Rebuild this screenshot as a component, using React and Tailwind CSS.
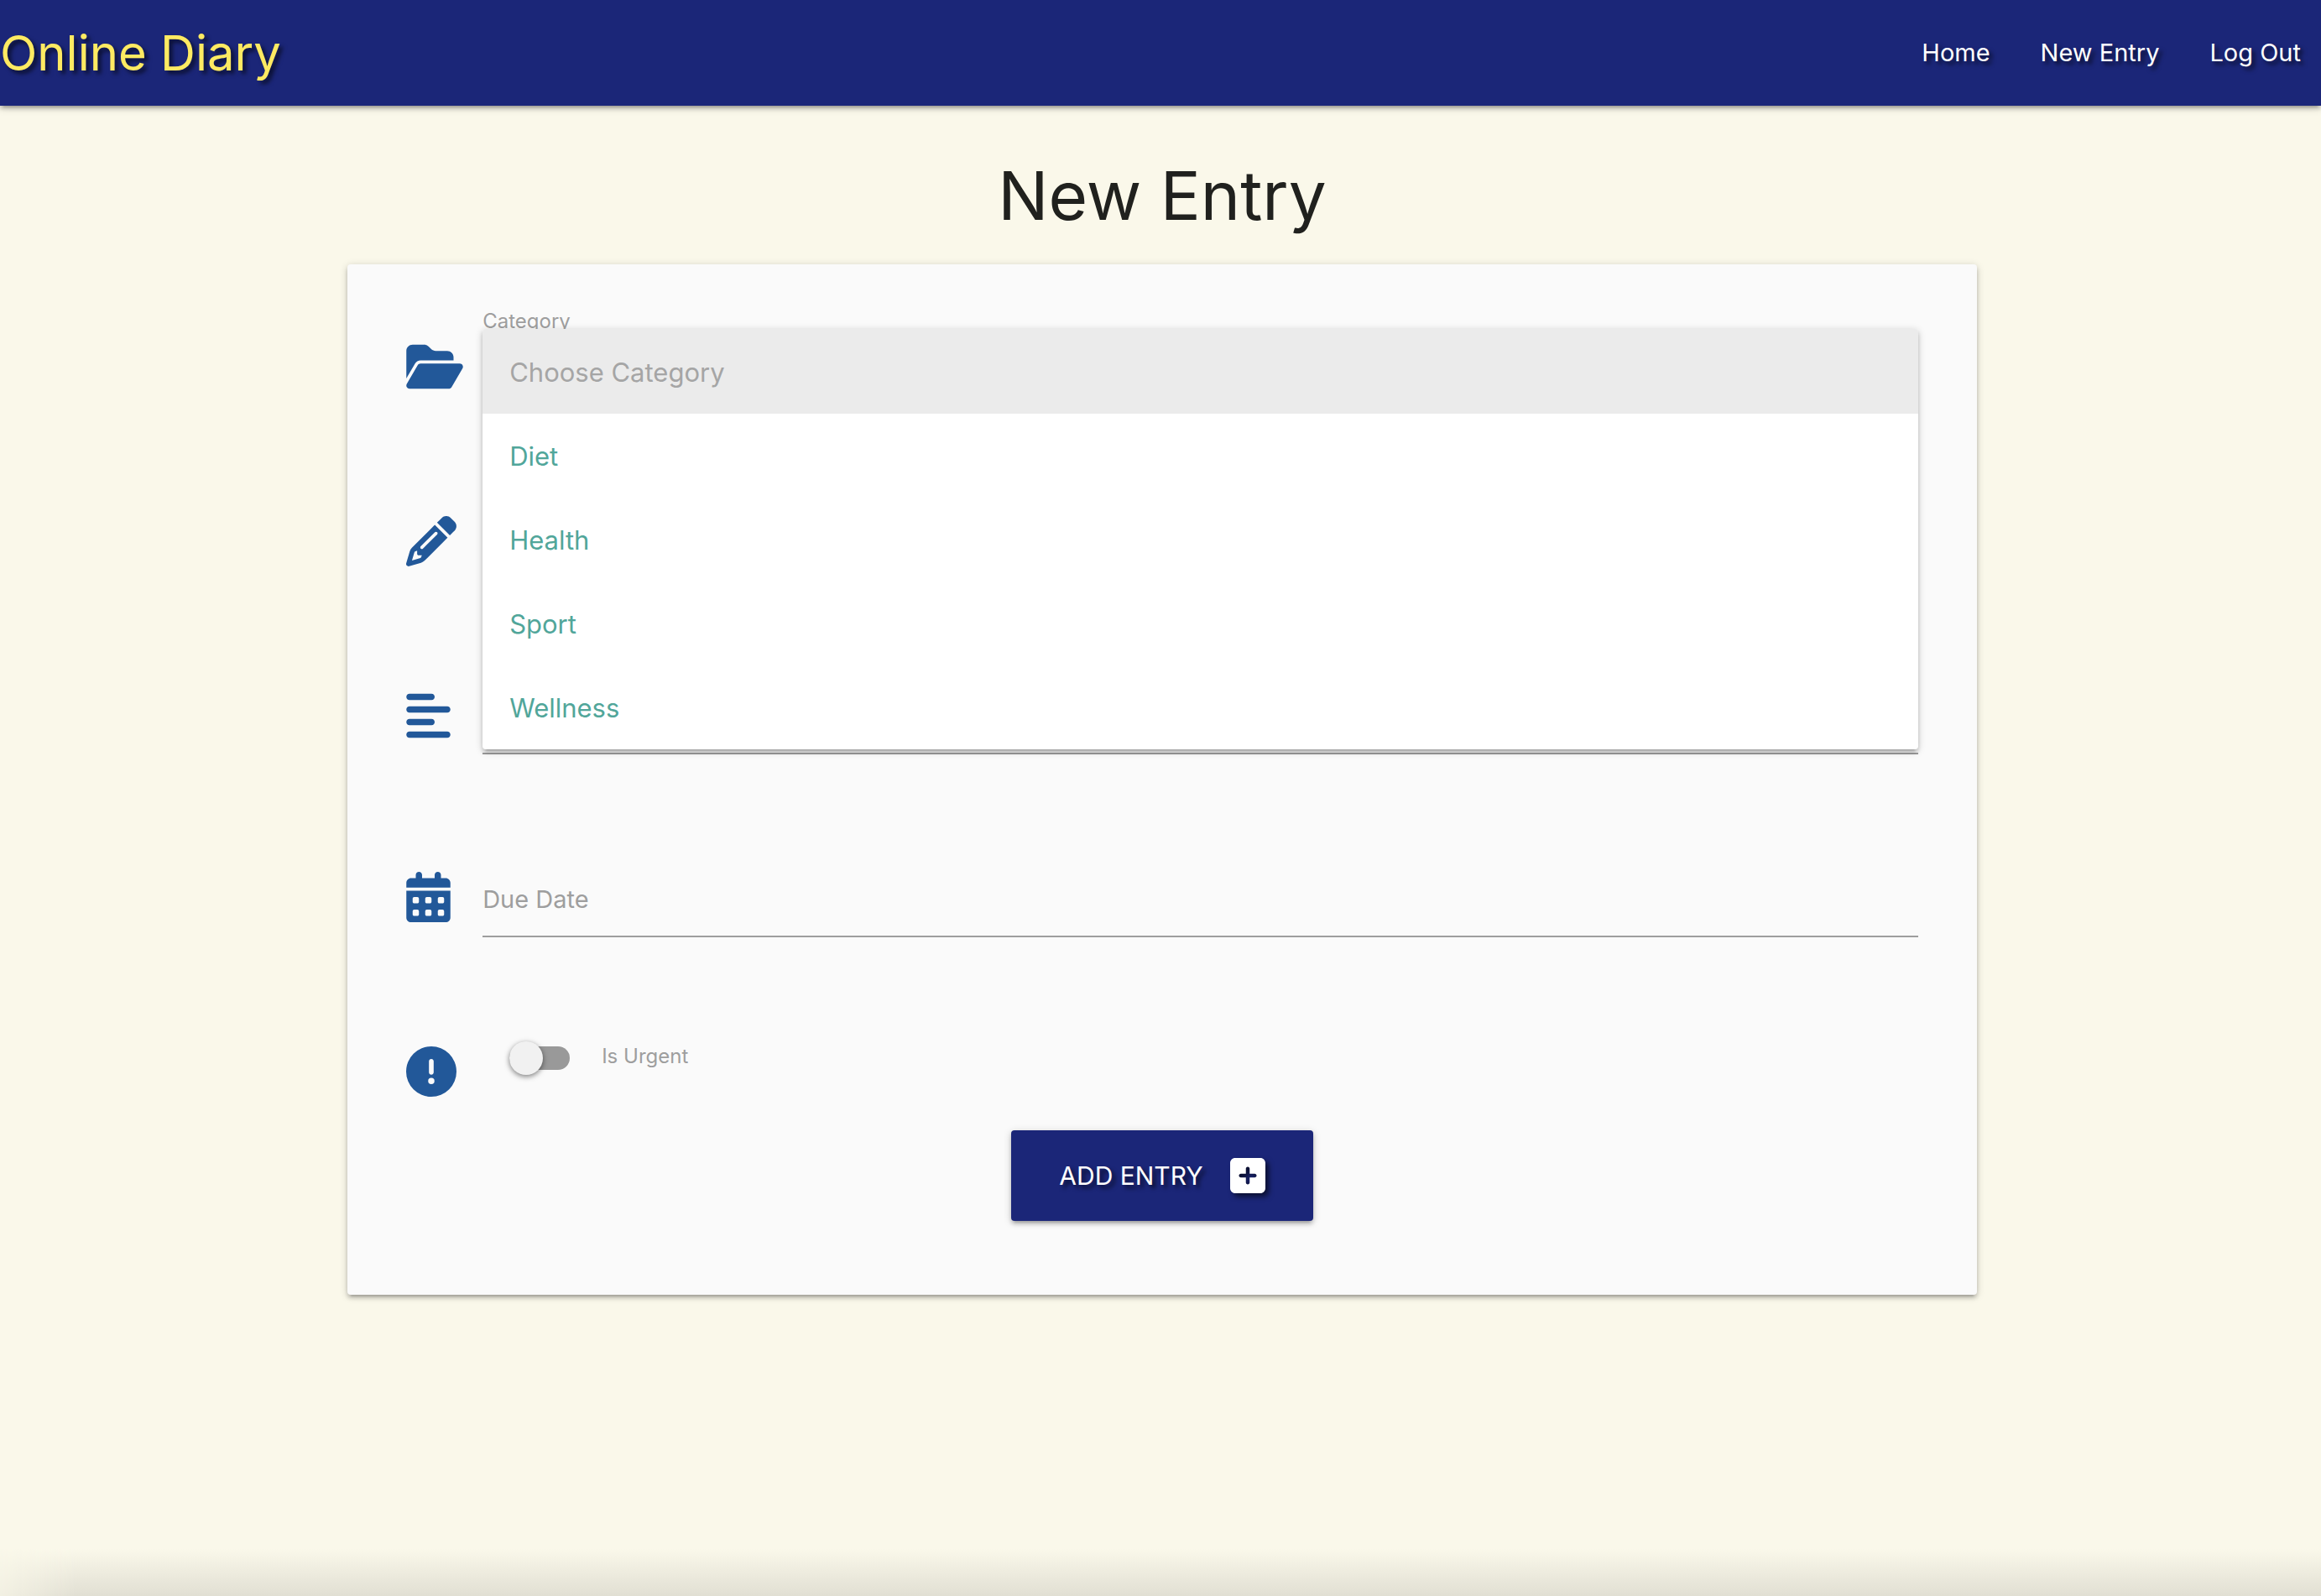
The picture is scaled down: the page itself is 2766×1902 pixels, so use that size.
import {
  FaAlignLeft,
  FaCalendarDays,
  FaCircleExclamation,
  FaFolderOpen,
  FaPencil,
  FaSquarePlus,
} from "react-icons/fa6";

const links = ["Home", "New Entry", "Log Out"];
const categories = ["Diet", "Health", "Sport", "Wellness"];

const raised =
  "shadow-[0_4px_4px_0_rgba(0,0,0,0.14),0_6px_2px_-4px_rgba(0,0,0,0.12),0_2px_10px_0_rgba(0,0,0,0.2)]";

function Row({ icon: Icon, iconWidth = "w-[60px]", className, children }) {
  return (
    <div className={`flex items-start ${className}`}>
      <div className="w-[91px] shrink-0 pt-[39px]">
        <Icon className={`h-[60px] text-[#225899] ${iconWidth}`} />
      </div>
      <div className="relative min-w-0 grow">{children}</div>
    </div>
  );
}

export default function App() {
  return (
    <div className="flex min-h-screen flex-col overflow-x-hidden bg-[#faf8ea] font-['Inter',sans-serif] text-[#20211e]">
      <header
        className={`z-10 flex h-[126px] items-center justify-between bg-[#1b2678] pr-6 [text-shadow:4px_4px_5px_rgba(0,0,0,0.6)] ${raised}`}
      >
        <a href="#home" className="text-[58px] leading-none text-[#feea62]">
          Online Diary
        </a>
        <nav className="flex gap-[60px] text-[29px] text-white">
          {links.map((link) => (
            <a key={link} href="#nav">
              {link}
            </a>
          ))}
        </nav>
      </header>

      <main className="flex flex-col items-center pl-1">
        <h1 className="mt-[59px] mb-[34px] text-[80px] leading-24">New Entry</h1>
        <form
          className={`w-[70.3%] rounded-[4px] bg-[#fafafa] px-[70px] pt-[53px] pb-[88px] ${raised}`}
        >
          <Row icon={FaFolderOpen} iconWidth="w-[68px]" className="h-[208px]">
            <label htmlFor="category" className="block text-[24px] leading-[30px] text-[#9e9e9e]">
              Category
            </label>
            <select
              id="category"
              size={5}
              className={`absolute inset-x-0 top-6 z-10 block h-[501px] w-full appearance-none overflow-hidden rounded-[4px] bg-white text-[31px] text-[#51a69a] outline-none ${raised}`}
            >
              <option disabled value="" className="bg-[#ebebeb] px-8 pt-[33px] pb-[31px] text-[#a5a5a5]">
                Choose Category
              </option>
              {categories.map((name) => (
                <option key={name} className="px-8 pt-8 pb-[31px]">
                  {name}
                </option>
              ))}
            </select>
          </Row>
          <Row icon={FaPencil} className="h-[208px]">
            <input
              type="text"
              aria-label="Title"
              className="mt-5 block h-24 w-full border-b-2 border-[#9e9e9e] bg-transparent text-[29px] outline-none"
            />
          </Row>
          <Row icon={FaAlignLeft} iconWidth="w-[53px]" className="h-[216px]">
            <textarea
              aria-label="Body"
              className="mt-[19px] block h-24 w-full resize-none border-b-2 border-[#9e9e9e] bg-transparent text-[29px] outline-none"
            />
          </Row>
          <Row icon={FaCalendarDays} iconWidth="w-[53px]" className="h-[208px]">
            <input
              type="text"
              aria-label="Due Date"
              placeholder="Due Date"
              className="mt-[27px] block h-[90px] w-full border-b-2 border-[#9e9e9e] bg-transparent text-[29px] outline-none placeholder:text-[#9e9e9e]"
            />
          </Row>
          <Row icon={FaCircleExclamation} className="h-[139px]">
            <label className="mt-[33px] ml-8 flex h-10 w-fit items-center text-[24px] text-[#9e9e9e]">
              <input type="checkbox" role="switch" className="peer sr-only" />
              <span className="flex h-7 w-[72px] items-center rounded-full bg-[#999999]">
                <span className="size-10 rounded-full bg-[#f1f1f1] shadow-[0_2px_6px_rgba(0,0,0,0.5)]" />
              </span>
              <span className="ml-[38px] pb-1">Is Urgent</span>
            </label>
          </Row>
          <button
            type="submit"
            className={`mx-auto flex h-[108px] items-center gap-8 rounded-[4px] bg-[#1b2678] px-[57px] text-[30px] text-white [text-shadow:4px_4px_5px_rgba(0,0,0,0.6)] ${raised}`}
          >
            ADD ENTRY
            <FaSquarePlus className="h-12 w-[42px] [filter:drop-shadow(4px_4px_3px_rgba(0,0,0,0.6))]" />
          </button>
        </form>
      </main>

      <div className="mt-auto h-14 bg-gradient-to-t from-[#e1dfd3] to-[#faf8ea] [mask-image:linear-gradient(to_right,rgba(0,0,0,0.3),black_90px)]" />
    </div>
  );
}
